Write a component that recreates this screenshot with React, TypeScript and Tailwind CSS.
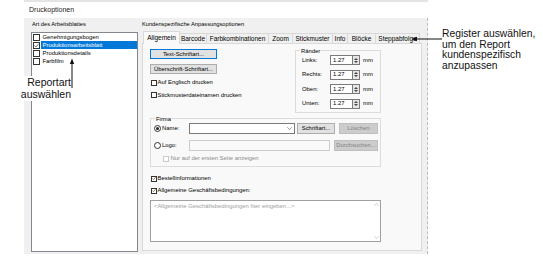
import React from "react";

function CheckBox({ checked = false, disabled = false, big = false }: { checked?: boolean; disabled?: boolean; big?: boolean }) {
  return (
    <span
      className={`${big ? "w-[7px] h-[7px]" : "w-[6px] h-[6px]"} shrink-0 border ${
        disabled ? "border-[#c8c8c8]" : "border-[#333333]"
      } bg-white flex items-center justify-center`}
    >
      {checked && (
        <svg width="5" height="5" viewBox="0 0 5 5">
          <path d="M0.5 2.6 L1.9 4 L4.5 0.8" fill="none" stroke="#333" strokeWidth="0.7" />
        </svg>
      )}
    </span>
  );
}

function Radio({ checked = false }: { checked?: boolean }) {
  return (
    <span className="w-[7px] h-[7px] shrink-0 rounded-full border border-[#333333] bg-white flex items-center justify-center">
      {checked && <span className="w-[3px] h-[3px] rounded-full bg-[#222222]" />}
    </span>
  );
}

function Spin({ label }: { label: string }) {
  return (
    <div className="h-[10px] flex items-center">
      <span className="w-[34px] pl-[6px]">{label}</span>
      <div className="w-[22px] h-[10px] border border-[#7a7a7a] border-r-0 bg-white flex items-center pl-[2px]">1.27</div>
      <div className="w-[8px] h-[10px] border border-[#7a7a7a] bg-[#e6e6e6] flex flex-col items-center justify-center gap-[1px]">
        <svg width="4" height="2" viewBox="0 0 4 2"><path d="M0 2 L2 0 L4 2 Z" fill="#444" /></svg>
        <svg width="4" height="2" viewBox="0 0 4 2"><path d="M0 0 L2 2 L4 0 Z" fill="#444" /></svg>
      </div>
      <span className="ml-[3px]">mm</span>
    </div>
  );
}

const listItems: [string, boolean][] = [
  ["Genehmigungsbogen", false],
  ["Produktionsarbeitsblatt", true],
  ["Produktionsdetails", false],
  ["Farbfilm", false],
];

const tabs: [string, string][] = [
  ["Barcode", "w-[27px]"],
  ["Farbkombinationen", "w-[62px]"],
  ["Zoom", "w-[24px]"],
  ["Stickmuster", "w-[40px]"],
  ["Info", "w-[15px]"],
  ["Blöcke", "w-[28px]"],
  ["Steppabfolge", "w-[44px]"],
];

export default function App() {
  return (
    <div className="w-[543px] h-[270px] bg-white relative overflow-hidden font-['Liberation_Sans',Arial,sans-serif] text-black">
      <div className="ml-[24px] w-[404px] flex flex-col">
        <div className="h-[2px] bg-[#e4e4e4]" />
        <div className="h-[15.5px] bg-white flex items-center pl-[5px] text-[7px] text-[#222]">Druckoptionen</div>
        <div className="h-[236px] bg-[#f0f0f0] flex border-r border-dashed border-[#bdbdbd] text-[5.9px]">
          {/* left column */}
          <div className="w-[114px] pl-[7px] flex flex-col">
            <div className="h-[14.5px] flex items-center pl-[1px] text-[5.7px]">Art des Arbeitsblattes</div>
            <div className="w-[107px] h-[220px] bg-white border border-[#828790] flex flex-col">
              {listItems.map(([name, sel]) => (
                <div key={name} className="h-[8px] flex items-center pl-[0.5px]">
                  <CheckBox big checked={sel} />
                  <span
                    className={`ml-[1.5px] pl-[1.5px] h-full flex items-center flex-1 ${
                      sel ? "bg-[#0078d7] text-white" : ""
                    }`}
                  >
                    {name}
                  </span>
                </div>
              ))}
            </div>
          </div>

          {/* right column */}
          <div className="ml-[4px] w-[280px] flex flex-col">
            <div className="h-[13.5px] flex items-center text-[5.7px]">Kundenspezifische Anpassungsoptionen</div>
            <div className="h-[12px] flex items-end pl-[1px] text-[6.5px]">
              <div className="w-[37px] h-[13px] -mb-[1px] relative z-10 bg-[#f9f9f9] border border-b-0 border-[#d9d9d9] flex items-center justify-center pb-[1px]">
                Allgemein
              </div>
              {tabs.map(([t, w]) => (
                <div
                  key={t}
                  className={`${w} h-[10px] bg-[#f0f0f0] border-t border-r border-[#d9d9d9] flex items-center justify-center`}
                >
                  {t}
                </div>
              ))}
            </div>
            <div className="h-[208px] w-[280px] border border-[#d9d9d9] bg-[#f9f9f9] flex flex-col pl-[7px]">
              {/* top section */}
              <div className="flex">
                <div className="w-[145px] flex flex-col pt-[5px]">
                  <div className="w-[67px] h-[10px] border border-[#0078d7] bg-[#e1e1e1] flex items-center justify-center">
                    Text-Schriftart...
                  </div>
                  <div className="mt-[5px] w-[67px] h-[10px] border border-[#adadad] bg-[#e1e1e1] flex items-center justify-center">
                    Überschrift-Schriftart...
                  </div>
                  <div className="mt-[4.5px] h-[8px] flex items-center pl-[0.5px]">
                    <CheckBox />
                    <span className="ml-[1px]">Auf Englisch drucken</span>
                  </div>
                  <div className="mt-[4.5px] h-[8px] flex items-center pl-[0.5px]">
                    <CheckBox />
                    <span className="ml-[1px]">Stickmusterdateinamen drucken</span>
                  </div>
                </div>
                <div className="mt-[6px] w-[86px] h-[63px] border border-[#dcdcdc] flex flex-col">
                  <div className="-mt-[4.5px] ml-[4px] w-fit px-[1px] bg-[#f9f9f9] h-[8px] leading-[8px]">Ränder</div>
                  <div className="mt-[0.5px] flex flex-col gap-[4.5px]">
                    <Spin label="Links:" />
                    <Spin label="Rechts:" />
                    <Spin label="Oben:" />
                    <Spin label="Unten:" />
                  </div>
                </div>
              </div>

              {/* Firma group */}
              <div className="mt-[5px] w-[231px] h-[49px] border border-[#dcdcdc] flex flex-col">
                <div className="-mt-[4.5px] ml-[4px] w-fit px-[1px] bg-[#f9f9f9] h-[8px] leading-[8px]">Firma</div>
                <div className="mt-[0.5px] h-[11px] flex items-center pl-[3px]">
                  <Radio checked />
                  <span className="ml-[1px] w-[27px]">Name:</span>
                  <div className="w-[106px] h-[11px] border border-[#7a7a7a] bg-white flex items-center justify-end pr-[2px]">
                    <svg width="5" height="3" viewBox="0 0 5 3"><path d="M0.3 0.3 L2.5 2.6 L4.7 0.3" fill="none" stroke="#555" strokeWidth="0.6" /></svg>
                  </div>
                  <div className="ml-[2px] w-[38px] h-[11px] border border-[#adadad] bg-[#e1e1e1] flex items-center justify-center">
                    Schriftart...
                  </div>
                  <div className="ml-[4px] w-[39px] h-[11px] border border-[#bfbfbf] bg-[#cccccc] text-[#838383] flex items-center justify-center">
                    Löschen
                  </div>
                </div>
                <div className="mt-[6px] h-[11px] flex items-center pl-[3px]">
                  <Radio />
                  <span className="ml-[1px] w-[27px]">Logo:</span>
                  <div className="w-[141px] h-[11px] border border-[#cccccc] bg-[#f9f9f9]" />
                  <div className="ml-[4px] w-[44px] h-[11px] border border-[#bfbfbf] bg-[#cccccc] text-[#838383] flex items-center justify-center">
                    Durchsuchen...
                  </div>
                </div>
                <div className="mt-[3.5px] h-[8px] flex items-center pl-[12px]">
                  <CheckBox disabled />
                  <span className="ml-[1.5px] text-[#8a8a8a]">Nur auf der ersten Seite anzeigen</span>
                </div>
              </div>

              <div className="mt-[7.5px] h-[8px] flex items-center pl-[0.5px]">
                <CheckBox checked />
                <span className="ml-[1px]">Bestellinformationen</span>
              </div>
              <div className="mt-[4px] h-[8px] flex items-center pl-[0.5px]">
                <CheckBox checked />
                <span className="ml-[1px]">Allgemeine Geschäftsbedingungen:</span>
              </div>
              <div className="mt-[5px] w-[231px] h-[42.5px] border border-[#a0a0a0] bg-white flex">
                <div className="flex-1 pl-[3px] pt-[2px] text-[#a0a0a0] leading-[7px]">
                  &lt;Allgemeine Geschäftsbedingungen hier eingeben...&gt;
                </div>
                <div className="w-[8px] flex flex-col items-center justify-between py-[2px]">
                  <svg width="5" height="3" viewBox="0 0 5 3"><path d="M0.3 2.7 L2.5 0.4 L4.7 2.7" fill="none" stroke="#b0b0b0" strokeWidth="0.6" /></svg>
                  <svg width="5" height="3" viewBox="0 0 5 3"><path d="M0.3 0.3 L2.5 2.6 L4.7 0.3" fill="none" stroke="#b0b0b0" strokeWidth="0.6" /></svg>
                </div>
              </div>
            </div>
          </div>
        </div>
      </div>

      {/* left annotation */}
      <div className="absolute left-[12px] top-[76px] w-[59px] h-[25px] bg-white text-right text-[10.5px] leading-[11.5px] pt-[1px] text-[#111]">
        Reportart
        <br />
        auswählen
      </div>
      <svg className="absolute left-[69px] top-[58px]" width="6" height="31" viewBox="0 0 6 31">
        <line x1="3" y1="4" x2="3" y2="30" stroke="#111" strokeWidth="1" />
        <path d="M0.8 6 L3 0.5 L5.2 6 Z" fill="#111" />
      </svg>

      {/* right annotation */}
      <svg className="absolute left-[411px] top-[36px]" width="31" height="6" viewBox="0 0 31 6">
        <line x1="4" y1="3" x2="31" y2="3" stroke="#111" strokeWidth="1" />
        <path d="M0.5 3 L6 0.8 L6 5.2 Z" fill="#111" />
      </svg>
      <div className="absolute left-[442px] top-[29px] text-[10.3px] leading-[10.5px] text-[#111]">
        Register auswählen,
        <br />
        um den Report
        <br />
        kundenspezifisch
        <br />
        anzupassen
      </div>
    </div>
  );
}
